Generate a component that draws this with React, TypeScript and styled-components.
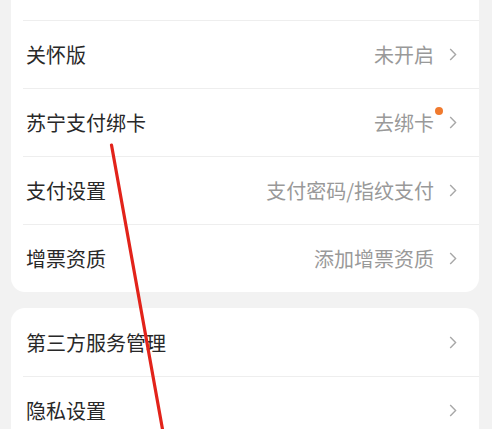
import * as React from "react"
import styled, { createGlobalStyle } from "styled-components"

const GlobalStyle = createGlobalStyle`
  html, body {
    margin: 0;
    padding: 0;
    background: #f2f2f2;
    overflow: hidden;
  }
  body {
    font-family: "Noto Sans CJK SC", "Noto Sans", sans-serif;
  }
`

const Page = styled.div`
  position: relative;
  height: 429px;
  overflow: hidden;
  padding: 0 13px 0 11px;
  display: flex;
  flex-direction: column;
  gap: 16px;
`

const Card = styled.div<{ $cutTop?: boolean }>`
  flex-shrink: 0;
  background: #ffffff;
  border-radius: 14px;
  margin-top: ${p => (p.$cutTop ? "-48px" : "0")};
  overflow: hidden;
`

const Row = styled.div`
  position: relative;
  height: 68px;
  display: flex;
  align-items: center;
  padding: 0 22px 0 15px;
  box-sizing: border-box;

  & + &::before {
    content: "";
    position: absolute;
    top: 0;
    left: 12px;
    right: 0;
    height: 1px;
    background: #eeeeee;
  }
`

const Label = styled.span`
  flex: 1;
  font-size: 20px;
  color: #282828;
`

const Value = styled.span`
  position: relative;
  font-size: 20px;
  color: #999999;
  margin-right: 15px;
`

const Dot = styled.span`
  position: absolute;
  top: -1px;
  right: -9px;
  width: 8px;
  height: 8px;
  border-radius: 50%;
  background: #f07a2e;
`

const Chevron = () => (
  <svg width="8" height="13" viewBox="0 0 8 13">
    <path d="M1.2 1 L6.6 6.5 L1.2 12" fill="none" stroke="#a8a8a8" strokeWidth="1.4" />
  </svg>
)

const Arrow = styled.svg`
  position: absolute;
  left: 0;
  top: 0;
  pointer-events: none;
`

type Item = { label: string; value?: string; dot?: boolean; chevron?: boolean }

// first row sits above the visible area, only its bottom divider shows
const first: Item[] = [
  { label: "", chevron: false },
  { label: "关怀版", value: "未开启" },
  { label: "苏宁支付绑卡", value: "去绑卡", dot: true },
  { label: "支付设置", value: "支付密码/指纹支付" },
  { label: "增票资质", value: "添加增票资质" },
]

const second: Item[] = [
  { label: "第三方服务管理" },
  { label: "隐私设置" },
]

const SettingRow: React.FC<{ item: Item }> = ({ item }) => (
  <Row>
    <Label>{item.label}</Label>
    {item.value && (
      <Value>
        {item.value}
        {item.dot && <Dot />}
      </Value>
    )}
    {item.chevron !== false && <Chevron />}
  </Row>
)

export default function App() {
  return (
    <>
      <GlobalStyle />
      <Page>
        <Card $cutTop>
          {first.map((it, i) => (
            <SettingRow key={i} item={it} />
          ))}
        </Card>
        <Card>
          {second.map((it, i) => (
            <SettingRow key={i} item={it} />
          ))}
        </Card>
        <Arrow width="492" height="429" viewBox="0 0 492 429">
          <line x1="111.5" y1="145" x2="163" y2="432" stroke="#e2231a" strokeWidth="3.2" strokeLinecap="round" />
        </Arrow>
      </Page>
    </>
  )
}
